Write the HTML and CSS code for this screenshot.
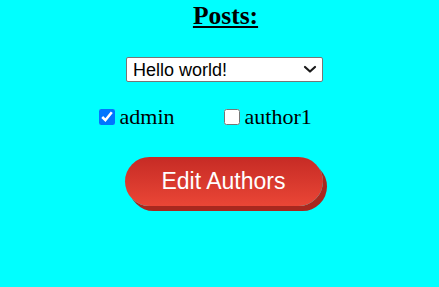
FILE: index.html
```html
<!DOCTYPE html>
<html>
<head>
<meta charset="utf-8">
<link rel="stylesheet" href="styles.css">
</head>
<body>
<div class="page">
  <h2 class="title">Posts:</h2>
  <div class="select-wrap">
    <select class="post-select">
      <option>Hello world!</option>
    </select>
    <svg class="chevron" width="14" height="9" viewBox="0 0 14 9"><path d="M2 2 L7 6.5 L12 2" fill="none" stroke="#1a1a1a" stroke-width="2.2" stroke-linecap="round" stroke-linejoin="round"/></svg>
  </div>
  <div class="authors">
    <label class="author"><input type="checkbox" checked>admin</label>
    <label class="author"><input type="checkbox">author1</label>
  </div>
  <button class="edit-btn">Edit Authors</button>
</div>
</body>
</html>
```
FILE: styles.css
```css
html, body {
  margin: 0;
  padding: 0;
  background: #00ffff;
  height: 100%;
}
.page {
  display: flex;
  flex-direction: column;
  align-items: center;
  padding: 1px 0 0 10px;
  font-family: "Liberation Serif", "Times New Roman", serif;
}
.title {
  margin: 0 0 0 2px;
  font-size: 25.5px;
  font-weight: bold;
  text-decoration: underline;
  line-height: 29px;
}
.select-wrap {
  position: relative;
  margin-top: 27px;
  width: 197px;
  height: 25px;
}
.post-select {
  -webkit-appearance: none;
  appearance: none;
  width: 197px;
  height: 25px;
  font-family: "Liberation Sans", Arial, sans-serif;
  font-size: 18px;
  color: #000;
  background: #fff;
  border: 1px solid #767676;
  border-radius: 2px;
  padding: 0 24px 0 6px;
  margin: 0;
}
.chevron {
  position: absolute;
  right: 6px;
  top: 8px;
  pointer-events: none;
}
.authors {
  display: flex;
  margin-top: 22px;
  margin-right: 2px;
}
.author {
  width: 125px;
  display: flex;
  align-items: center;
  font-size: 22px;
  line-height: 25px;
}
.author input {
  width: 16px;
  height: 16px;
  margin: 0 5px 0 0;
}
.edit-btn {
  margin-top: 28px;
  margin-right: 2px;
  width: 198px;
  height: 49px;
  border: none;
  border-radius: 25px;
  background: linear-gradient(to bottom, #c62b25, #ea4636);
  box-shadow: 4px 5px 0 #a8281f;
  color: #fff;
  font-family: "Liberation Sans", Arial, sans-serif;
  font-size: 23px;
  padding: 0;
}
```
